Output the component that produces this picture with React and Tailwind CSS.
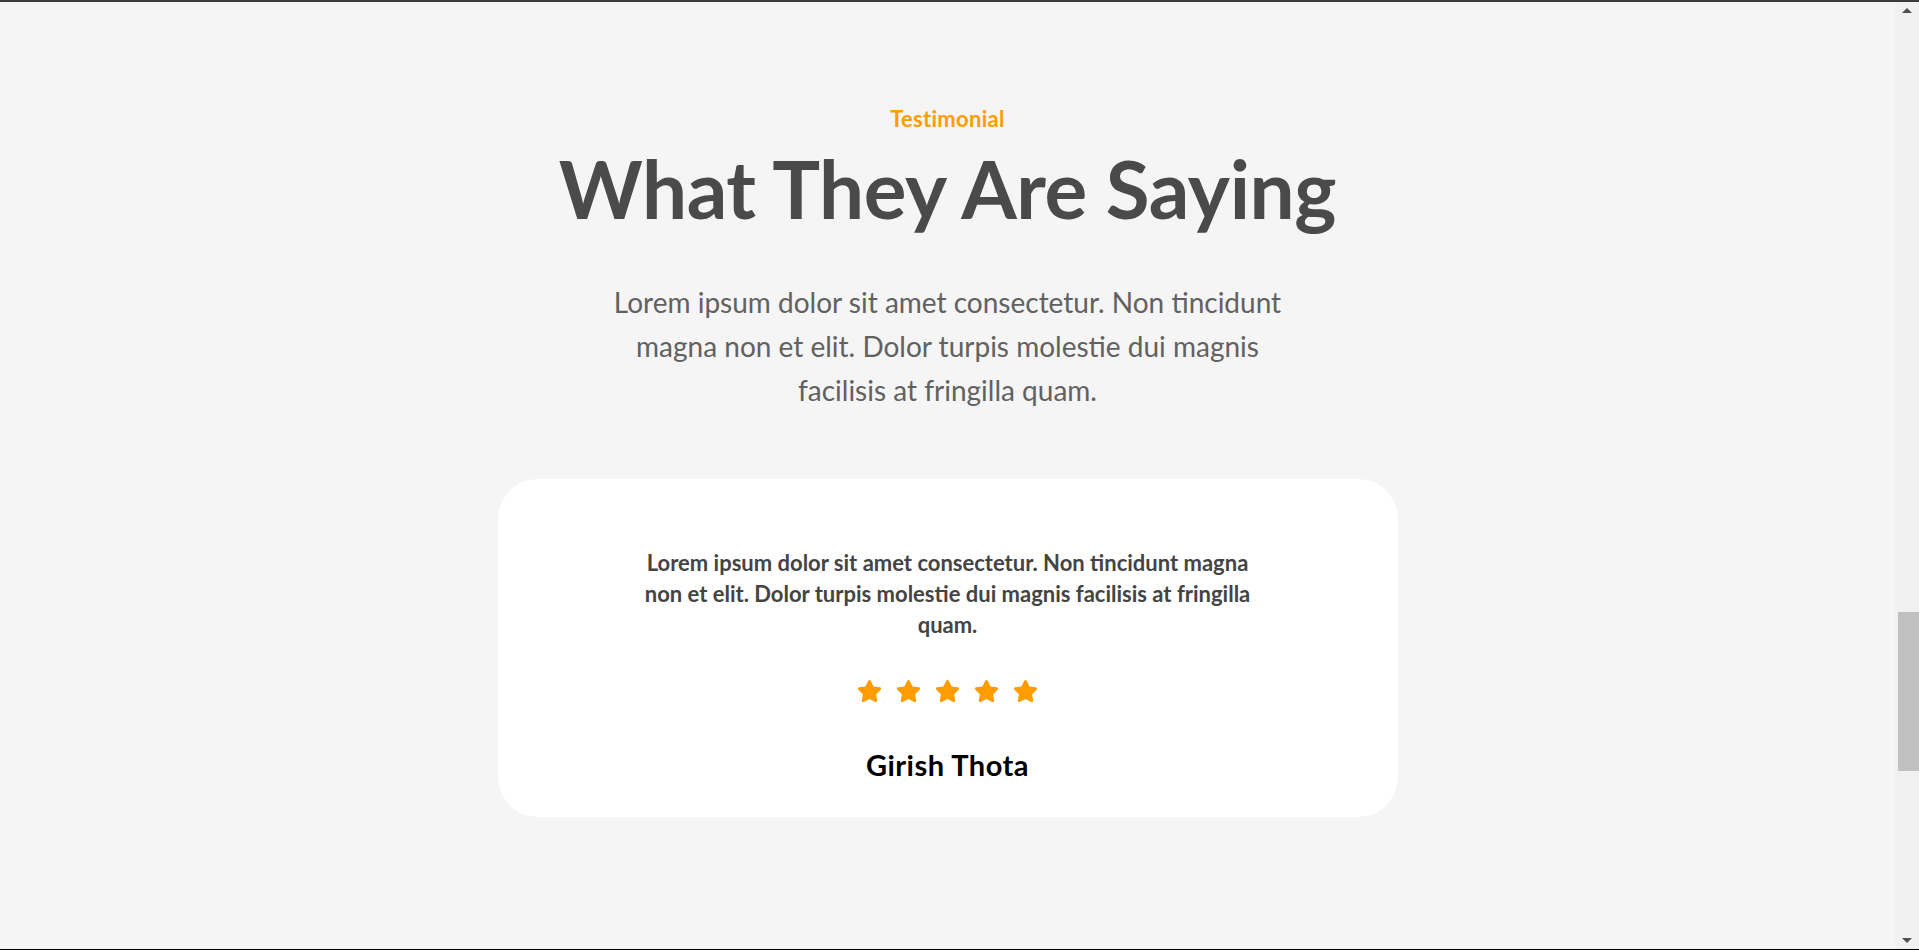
import React from 'react'
import { FaStar } from "react-icons/fa"

const font = { fontFamily: '"Lato", "Liberation Sans", sans-serif' }

function Scrollbar() {
  return (
    <aside className='w-[24px] shrink-0 bg-[#f1f1f1] flex flex-col items-center'>
      <div className='h-[17px] w-full flex items-center justify-center'>
        <div className='w-0 h-0 border-l-[5px] border-r-[5px] border-b-[5px] border-l-transparent border-r-transparent border-b-[#505050]' />
      </div>
      <div className='mt-[593px] h-[159px] w-[21px] ml-[2px] bg-[#c1c1c1]' />
      <div className='flex-1' />
      <div className='h-[17px] w-full flex items-center justify-center'>
        <div className='w-0 h-0 border-l-[5px] border-r-[5px] border-t-[5px] border-l-transparent border-r-transparent border-t-[#505050]' />
      </div>
    </aside>
  )
}

function Testimonials() {
  return (
    <section className='flex-1 flex flex-col items-center pt-[104px]' style={font}>
      <p className='text-[22px] leading-[26px] font-bold tracking-[0.3px] text-[#ff9c00]'>Testimonial</p>
      <h2 className='mt-[16px] text-[80px] leading-[80px] font-bold tracking-[-0.4px] text-[#4a4a4a]'>
        What They Are Saying
      </h2>
      <p className='mt-[52px] w-[690px] text-center text-[28px] leading-[44px] text-[#616161]'>
        Lorem ipsum dolor sit amet consectetur. Non tincidunt magna non et elit. Dolor turpis molestie dui magnis facilisis at fringilla quam.
      </p>

      {/* Card */}
      <div className='mt-[67px] w-[900px] bg-white rounded-[40px] pt-[68px] pb-[36px] flex flex-col items-center'>
        <p className='text-center text-[22px] leading-[31px] font-bold text-[#444444]'>
          Lorem ipsum dolor sit amet consectetur. Non tincidunt magna<br />
          non et elit. Dolor turpis molestie dui magnis facilisis at fringilla<br />
          quam.
        </p>
        <div className='mt-[39px] flex items-center gap-[14px] text-[#ff9c00]'>
          {[0, 1, 2, 3, 4].map((i) => (
            <FaStar key={i} className='w-[25px] h-[24px]' />
          ))}
        </div>
        <h4 className='mt-[46px] text-[29px] leading-[32px] font-bold tracking-[0.5px] text-black'>Girish Thota</h4>
      </div>
    </section>
  )
}

export default function App() {
  return (
    <div className='h-[950px] w-full bg-[#f5f5f5] border-t-2 border-t-[#3c3c3c] border-b border-b-black flex overflow-hidden'>
      <Testimonials />
      <Scrollbar />
    </div>
  )
}
